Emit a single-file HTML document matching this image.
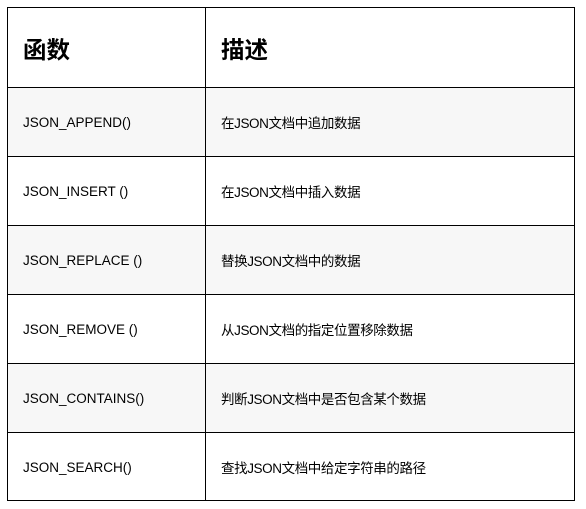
<!DOCTYPE html>
<html><head><meta charset="utf-8"><style>
body{margin:0;width:586px;height:509px;background:#fff;position:relative;overflow:hidden;font-family:"Liberation Sans","Noto Sans CJK SC",sans-serif;color:#000}
.r{position:absolute;left:7px;width:567px;border-top:1px solid #000;box-sizing:border-box}
.c{position:absolute;display:flex;align-items:center}
.v{position:absolute;top:7px;width:1px;height:494px;background:#000}
</style></head><body>
<div style="position:absolute;left:7px;top:7px;width:568px;height:494px;border:1px solid #000;box-sizing:border-box"></div>
<div class="v" style="left:205px"></div>
<div style="position:absolute;left:8px;top:88px;width:197px;height:68px;background:#f7f7f7"></div>
<div style="position:absolute;left:206px;top:88px;width:368px;height:68px;background:#f7f7f7"></div>
<div style="position:absolute;left:8px;top:226px;width:197px;height:68px;background:#f7f7f7"></div>
<div style="position:absolute;left:206px;top:226px;width:368px;height:68px;background:#f7f7f7"></div>
<div style="position:absolute;left:8px;top:364px;width:197px;height:68px;background:#f7f7f7"></div>
<div style="position:absolute;left:206px;top:364px;width:368px;height:68px;background:#f7f7f7"></div>
<div class="r" style="top:87px"></div>
<div class="r" style="top:156px"></div>
<div class="r" style="top:225px"></div>
<div class="r" style="top:294px"></div>
<div class="r" style="top:363px"></div>
<div class="r" style="top:432px"></div>
<div class="c" style="left:23px;top:8px;height:79px;font-size:23.5px;font-weight:bold">函数</div>
<div class="c" style="left:221px;top:8px;height:79px;font-size:23.5px;font-weight:bold">描述</div>
<div style="font-size:13.5px">
<div class="c" style="left:23px;top:88px;height:68px">JSON_APPEND()</div>
<div class="c" style="left:221px;top:88px;height:68px;letter-spacing:-0.4px">在JSON文档中追加数据</div>
<div class="c" style="left:23px;top:157px;height:68px">JSON_INSERT ()</div>
<div class="c" style="left:221px;top:157px;height:68px;letter-spacing:-0.4px">在JSON文档中插入数据</div>
<div class="c" style="left:23px;top:226px;height:68px">JSON_REPLACE ()</div>
<div class="c" style="left:221px;top:226px;height:68px;letter-spacing:-0.4px">替换JSON文档中的数据</div>
<div class="c" style="left:23px;top:295px;height:68px">JSON_REMOVE ()</div>
<div class="c" style="left:221px;top:295px;height:68px;letter-spacing:-0.4px">从JSON文档的指定位置移除数据</div>
<div class="c" style="left:23px;top:364px;height:68px">JSON_CONTAINS()</div>
<div class="c" style="left:221px;top:364px;height:68px;letter-spacing:-0.4px">判断JSON文档中是否包含某个数据</div>
<div class="c" style="left:23px;top:433px;height:68px">JSON_SEARCH()</div>
<div class="c" style="left:221px;top:433px;height:68px;letter-spacing:-0.4px">查找JSON文档中给定字符串的路径</div>
</div>
</body></html>
